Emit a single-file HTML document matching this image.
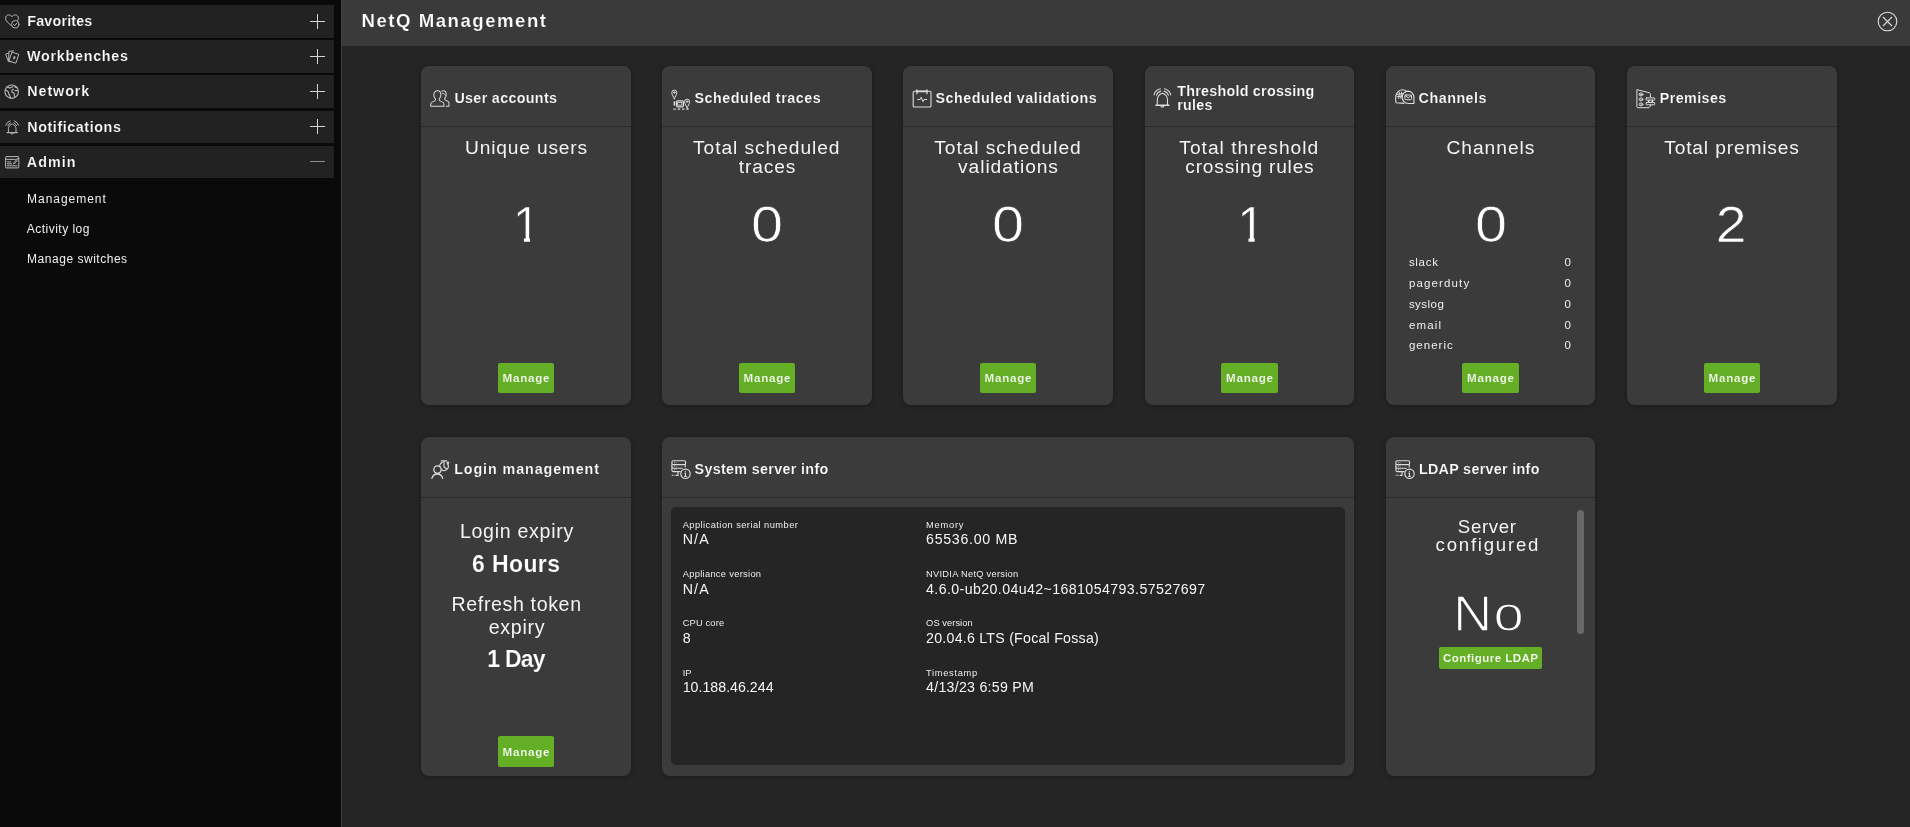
<!DOCTYPE html>
<html lang="en">
<head>
<meta charset="utf-8">
<title>NetQ Management</title>
<style>
*{box-sizing:border-box;margin:0;padding:0}
html,body{width:1910px;height:827px;overflow:hidden;background:#252525;color:#fff;font-family:"Liberation Sans",sans-serif}
body{position:relative}
#side .t,#hdr>.t,.card{will-change:opacity}
.t{position:absolute;line-height:1;white-space:nowrap}
svg{position:absolute;overflow:visible}
#side{position:absolute;left:0;top:0;width:341px;height:827px;background:#0a0a0a}
.nav{position:absolute;left:0;width:334px;background:#222}
.plus{position:absolute;left:310px;width:15px;height:15px}
.plus:before{content:"";position:absolute;left:0;top:7px;width:15px;height:1px;background:#d4d4d4}
.plus:after{content:"";position:absolute;left:7px;top:0;width:1px;height:15px;background:#d4d4d4}
.minus{position:absolute;left:310px;width:15px;height:1px;background:#8c8c8c}
#hdr{position:absolute;left:341px;top:0;width:1569px;height:46px;background:#3a3a3a}
#edge{position:absolute;left:341px;top:0;width:1px;height:827px;background:#404040}
.card{position:absolute;background:#3b3b3b;border-radius:8px;box-shadow:0 1px 5px rgba(0,0,0,.3)}
.hd{position:absolute;left:0;top:0;right:0;height:61px;border-bottom:1px solid #2a2a2a}
.num{-webkit-text-stroke:.7px #3b3b3b}
.btn{position:absolute;background:#64af26;border-radius:2px}
.panel{position:absolute;background:#252525;border-radius:5px}
.sb{position:absolute;background:#686868;border-radius:4px}
</style>
</head>
<body>
<div id="side">
<div class="nav" style="top:5px;height:33px"><svg style="left:4.9px;top:9.1px" width="15" height="15" viewBox="0 0 15 15" fill="none" stroke="#b4b4b4" stroke-width="1" stroke-linecap="round" stroke-linejoin="round"><path d="M7 2.4C5.6.2.6.1.6 4.3.6 7 3.2 8.9 6.2 11.6"/><path d="M7 2.4C8.4.2 13.4.1 13.4 4.3 13.4 5.1 13.2 5.8 12.8 6.5"/><circle cx="10.2" cy="10.3" r="3.7"/><path d="M8.5 10.4l1.2 1.2 2.2-2.6"/></svg><span class="t" style="left:27.3px;top:8.8px;font-size:14.3px;font-weight:bold;letter-spacing:0.18px;-webkit-text-stroke:.18px #222;">Favorites</span><span class="plus" style="top:9px"></span></div>
<div class="nav" style="top:40px;height:33px"><svg style="left:4.9px;top:9.5px" width="15" height="14" viewBox="0 0 15 14" fill="none" stroke="#b4b4b4" stroke-width="1" stroke-linecap="round" stroke-linejoin="round"><path d="M3.4 11.6.6 4.2 3.4 3.1"/><path d="M6.2 11.9 3.6 10.9 3.9 1.3 8.6.9"/><path d="M7.3 2.2l6.5 2.2-3 8.8-6.5-2.2z"/><ellipse cx="9.3" cy="7.7" rx="1.2" ry="1.9" transform="rotate(18 9.3 7.7)" fill="#9a9a9a" stroke="none"/></svg><span class="t" style="left:27.0px;top:9.0px;font-size:14.3px;font-weight:bold;letter-spacing:0.75px;-webkit-text-stroke:.18px #222;">Workbenches</span><span class="plus" style="top:9px"></span></div>
<div class="nav" style="top:75px;height:33px"><svg style="left:4.4px;top:8.7px" width="16" height="16" viewBox="0 0 16 16" fill="none" stroke="#b4b4b4" stroke-width="1.1" stroke-linecap="round" stroke-linejoin="round"><circle cx="7.7" cy="7.7" r="6.7"/><path d="M3.4 2.9c1.2.3 1.5 1.3 2.7 1.1 1-.2 1.3-1.4 2.6-1.2M1.4 6.4c1.1-.4 2 .3 2.7 1.2.7 1 .2 2.2 1.1 2.9 1 .8.6 2.2 1.3 3.4M9.4 5.4c-1.2.2-1.9 1.2-1.5 2.3.4 1.1 1.8.8 2.3 1.9.5 1.1-.3 2.2.6 3.2M10.7 2.4c.3 1 1.3 1.2 2.3 1.1M11.1 6.6h2.2" stroke-width="1.2"/></svg><span class="t" style="left:27.3px;top:9.2px;font-size:14.3px;font-weight:bold;letter-spacing:0.93px;-webkit-text-stroke:.18px #222;">Network</span><span class="plus" style="top:9px"></span></div>
<div class="nav" style="top:111px;height:32px"><svg style="left:4.9px;top:8.6px" width="15" height="15" viewBox="0 0 15 15" fill="none" stroke="#b4b4b4" stroke-width="1" stroke-linecap="round" stroke-linejoin="round"><path d="M0.79 5.24A6.7 6.7 0 0 1 5.13 0.83M2.88 5.63A4.6 4.6 0 0 1 5.48 2.93M9.27 0.83A6.7 6.7 0 0 1 13.61 5.24M8.92 2.93A4.6 4.6 0 0 1 11.52 5.63"/><path d="M3.4 12.4V8.8C3.4 6.5 5 4.7 7.2 4c2.2.7 3.8 2.5 3.8 4.8v3.6"/><path d="M2.1 12.6h10.2" stroke-width="1.3"/><path d="M6.1 13.7q1.1.8 2.2 0"/></svg><span class="t" style="left:27.3px;top:8.5px;font-size:14.3px;font-weight:bold;letter-spacing:0.58px;-webkit-text-stroke:.18px #222;">Notifications</span><span class="plus" style="top:8px"></span></div>
<div class="nav" style="top:146px;height:32px"><svg style="left:4.9px;top:9.8px" width="15" height="13" viewBox="0 0 15 13" fill="none" stroke="#b4b4b4" stroke-width="1" stroke-linecap="round" stroke-linejoin="round"><rect x=".6" y=".6" width="13.2" height="11.3" rx=".8"/><path d="M.6 3.4h9.8M2.3 5.9h3.4M2.3 7.8h4.4M2.3 9.8h9.8" /><path d="M12.6 2.2 9 6.6 8.4 8 9.8 7.4 13.4 3z" stroke-width=".9"/></svg><span class="t" style="left:26.8px;top:8.6px;font-size:14.3px;font-weight:bold;letter-spacing:1.03px;-webkit-text-stroke:.18px #222;">Admin</span><span class="minus" style="top:15px"></span></div>
<span class="t" style="left:27.1px;top:192.8px;font-size:12px;color:#f0f0f0;letter-spacing:0.96px;">Management</span>
<span class="t" style="left:26.8px;top:222.8px;font-size:12px;color:#f0f0f0;letter-spacing:0.48px;">Activity log</span>
<span class="t" style="left:27.1px;top:252.9px;font-size:12px;color:#f0f0f0;letter-spacing:0.52px;">Manage switches</span>
</div>
<div id="hdr">
<span class="t" style="left:20.5px;top:11.8px;font-size:18.6px;font-weight:bold;letter-spacing:1.52px;-webkit-text-stroke:.2px #3a3a3a;">NetQ Management</span>
<svg style="left:1536px;top:11px" width="21" height="21" viewBox="0 0 21 21" fill="none" stroke="#dcdcdc" stroke-width="1.1"><circle cx="10.5" cy="10.5" r="9.3"/><path d="M6 6l9 9M15 6l-9 9"/></svg>
</div>
<div id="edge"></div>
<div class="card" style="left:421px;top:66px;width:210px;height:339px">
<div class="hd">
<svg style="left:8.6px;top:23.6px" width="20.05" height="17.19" viewBox="0 0 21 18" fill="none" stroke="#dcdcdc" stroke-width="1.05" stroke-linecap="round" stroke-linejoin="round"><path d="M.8 17V14.6c0-1.4 1.1-1.9 2.5-2.4 1.6-.6 2.5-1 2.5-2.1 0-.7-.4-1.1-.8-1.7-.6-.9-1-1.7-1-3.4C4 2.6 5.4.9 7.7.9s3.7 1.7 3.7 4.1c0 1.7-.4 2.5-1 3.4-.4.6-.8 1-.8 1.7 0 1.1.9 1.5 2.5 2.1 1.4.5 2.5 1 2.5 2.4V17z"/><path d="M12.2 1.2c.5-.2 1-.3 1.5-.3 2 0 3.3 1.6 3.3 3.8 0 1.6-.3 2.3-.9 3.1-.4.6-.8.9-.8 1.6 0 1 .9 1.4 2.3 1.9 1.3.5 2.3.9 2.3 2.3V17h-2.9"/><path d="M12.9 3.3c1.3.3 2.6 1 3.3 2.3" stroke-width=".9"/></svg>
<span class="t" style="left:33.4px;top:24.8px;font-size:14.3px;font-weight:bold;letter-spacing:0.34px;-webkit-text-stroke:.18px #3b3b3b;">User accounts</span>
</div>
<span class="t" style="left:44.0px;top:71.9px;font-size:19.2px;color:#f3f3f3;letter-spacing:0.83px;">Unique users</span>
<span class="t num" style="left:75.5px;width:60px;text-align:center;top:134.1px;font-size:49.5px;clip-path:polygon(0 0,100% 0,100% 72%,55.9% 72%,55.9% 100%,45.7% 100%,45.7% 72%,0 72%);">1</span>
<div class="btn" style="left:76.9px;top:297.0px;width:56.2px;height:30.2px"><span class="t" style="left:4.7px;top:9.1px;font-size:11.6px;font-weight:bold;letter-spacing:0.75px;-webkit-text-stroke:.18px #64af26;">Manage</span></div>
</div>
<div class="card" style="left:662px;top:66px;width:210px;height:339px">
<div class="hd">
<svg style="left:8.5px;top:22.5px" width="21" height="22" viewBox="0 0 21 22" fill="none" stroke="#dcdcdc" stroke-width="1" stroke-linecap="round" stroke-linejoin="round"><path d="M3.3 9.8C2.7 7.6 0.8 5.97 0.8 3.6A2.5 2.5 0 1 1 5.8 3.6C5.8 5.97 3.9 7.6 3.3 9.8z"/><circle cx="3.3" cy="3.5" r=".8"/><path d="M16.1 19C15.5 16.8 13.6 15.07 13.6 12.7A2.5 2.5 0 1 1 18.6 12.7C18.6 15.07 16.7 16.8 16.1 19z"/><circle cx="16.1" cy="12.6" r=".8"/><rect x="5.4" y="11.8" width="7.1" height="6" rx="1.2" stroke-width="1.2"/><rect x="6.9" y="13.4" width="4.1" height="2.8" stroke-width=".9"/><path d="M3.35 12.3v4.2" stroke-width="1.5" stroke-linecap="butt"/><path d="M2.4 20.15h15.4" stroke-dasharray="2.4 1.9" stroke-width="1.2" stroke-linecap="butt"/></svg>
<span class="t" style="left:32.4px;top:24.8px;font-size:14.3px;font-weight:bold;letter-spacing:0.52px;-webkit-text-stroke:.18px #3b3b3b;">Scheduled traces</span>
</div>
<span class="t" style="left:31.1px;top:71.9px;font-size:19.2px;color:#f3f3f3;letter-spacing:0.93px;">Total scheduled</span>
<span class="t" style="left:76.7px;top:90.9px;font-size:19.2px;color:#f3f3f3;letter-spacing:0.87px;">traces</span>
<span class="t num" style="left:75.0px;width:60px;text-align:center;top:134.1px;font-size:49.5px;transform:scaleX(1.165);">0</span>
<div class="btn" style="left:76.9px;top:297.0px;width:56.2px;height:30.2px"><span class="t" style="left:4.7px;top:9.1px;font-size:11.6px;font-weight:bold;letter-spacing:0.75px;-webkit-text-stroke:.18px #64af26;">Manage</span></div>
</div>
<div class="card" style="left:903px;top:66px;width:210px;height:339px">
<div class="hd">
<svg style="left:8.5px;top:22.5px" width="21" height="20" viewBox="0 0 21 20" fill="none" stroke="#dcdcdc" stroke-width="1.1" stroke-linecap="round" stroke-linejoin="round"><rect x="1.2" y="2.3" width="17.8" height="15.7" rx="1"/><path d="M4.9.9v3.8M15 .9v3.8" stroke-width="1.3"/><path d="M4.9 2.4h10" stroke-width="1.6"/><path d="M5.7 10.5h2.3l1.2-2.2 1.8 4.3 1.1-2.1h2.6" stroke-width="1"/></svg>
<span class="t" style="left:32.5px;top:24.8px;font-size:14.3px;font-weight:bold;letter-spacing:0.51px;-webkit-text-stroke:.18px #3b3b3b;">Scheduled validations</span>
</div>
<span class="t" style="left:31.3px;top:71.9px;font-size:19.2px;color:#f3f3f3;letter-spacing:0.93px;">Total scheduled</span>
<span class="t" style="left:55.1px;top:90.9px;font-size:19.2px;color:#f3f3f3;letter-spacing:0.92px;">validations</span>
<span class="t num" style="left:75.3px;width:60px;text-align:center;top:134.1px;font-size:49.5px;transform:scaleX(1.165);">0</span>
<div class="btn" style="left:76.9px;top:297.0px;width:56.2px;height:30.2px"><span class="t" style="left:4.7px;top:9.1px;font-size:11.6px;font-weight:bold;letter-spacing:0.75px;-webkit-text-stroke:.18px #64af26;">Manage</span></div>
</div>
<div class="card" style="left:1145px;top:66px;width:209px;height:339px">
<div class="hd">
<svg style="left:8px;top:22.1px" width="20" height="20" viewBox="0 0 20 20" fill="none" stroke="#dcdcdc" stroke-width="1.1" stroke-linecap="round" stroke-linejoin="round"><path d="M1.04 6.8A8.7 8.7 0 0 1 7.3 0.76M3.44 7.15A6.3 6.3 0 0 1 7.66 3.14M11.5 0.76A8.7 8.7 0 0 1 17.76 6.8M11.14 3.14A6.3 6.3 0 0 1 15.36 7.15"/><path d="M4.3 17V11.9C4.3 8.7 6.3 6.3 9.4 5.3c3.1 1 5.1 3.4 5.1 6.6V17"/><path d="M2.9 17.3h13" stroke-width="1.4"/><path d="M8 18.5q1.4 1.1 2.8 0"/></svg>
<span class="t" style="left:32.2px;top:17.8px;font-size:14.3px;font-weight:bold;letter-spacing:0.26px;-webkit-text-stroke:.18px #3b3b3b;">Threshold crossing</span>
<span class="t" style="left:32.2px;top:31.8px;font-size:14.3px;font-weight:bold;letter-spacing:0.28px;-webkit-text-stroke:.18px #3b3b3b;">rules</span>
</div>
<span class="t" style="left:34.3px;top:71.7px;font-size:19.2px;color:#f3f3f3;letter-spacing:1.01px;">Total threshold</span>
<span class="t" style="left:40.3px;top:90.7px;font-size:19.2px;color:#f3f3f3;letter-spacing:0.77px;">crossing rules</span>
<span class="t num" style="left:76.1px;width:60px;text-align:center;top:134.1px;font-size:49.5px;clip-path:polygon(0 0,100% 0,100% 72%,55.9% 72%,55.9% 100%,45.7% 100%,45.7% 72%,0 72%);">1</span>
<div class="btn" style="left:76.4px;top:297.0px;width:56.2px;height:30.2px"><span class="t" style="left:4.7px;top:9.1px;font-size:11.6px;font-weight:bold;letter-spacing:0.75px;-webkit-text-stroke:.18px #64af26;">Manage</span></div>
</div>
<div class="card" style="left:1386px;top:66px;width:209px;height:339px">
<div class="hd">
<svg style="left:8.9px;top:22.5px" width="21" height="17" viewBox="0 0 21 17" fill="none" stroke="#dcdcdc" stroke-width="1.1" stroke-linecap="round" stroke-linejoin="round"><path d="M8.9 14.4l-7.8-.6c-.3-1.3-.5-2.7-.5-4.6C.6 4.4 3.6.7 7.4.7c1.5 0 2.8.5 3.9 1.5"/><path d="M4.4 3.4l-.7 6M6.6 3.1l-.8 6.2M2.6 5.3l5.2-.4M2.4 7.6l5-.4" stroke-width="1"/><path d="M13.3 2.1a6.2 6.2 0 1 0 0 12.4h5.6v-6.2a6.2 6.2 0 0 0-5.6-6.2z" stroke-width="1.2"/><rect x="9.9" y="6" width="6.6" height="4.7" rx=".9" stroke-width="1"/><path d="M10.4 6.6l2.8 2.2 2.8-2.2" stroke-width="1"/></svg>
<span class="t" style="left:32.6px;top:24.8px;font-size:14.3px;font-weight:bold;letter-spacing:0.51px;-webkit-text-stroke:.18px #3b3b3b;">Channels</span>
</div>
<span class="t" style="left:60.4px;top:71.9px;font-size:19.2px;color:#f3f3f3;letter-spacing:1.00px;">Channels</span>
<span class="t" style="left:22.9px;top:191.4px;font-size:11.5px;color:#f0f0f0;letter-spacing:0.70px;">slack</span>
<span class="t" style="left:178.6px;top:191.4px;font-size:11.5px;color:#f0f0f0;">0</span>
<span class="t" style="left:22.9px;top:212.4px;font-size:11.5px;color:#f0f0f0;letter-spacing:1.14px;">pagerduty</span>
<span class="t" style="left:178.6px;top:212.4px;font-size:11.5px;color:#f0f0f0;">0</span>
<span class="t" style="left:22.9px;top:233.3px;font-size:11.5px;color:#f0f0f0;letter-spacing:0.48px;">syslog</span>
<span class="t" style="left:178.6px;top:233.3px;font-size:11.5px;color:#f0f0f0;">0</span>
<span class="t" style="left:22.9px;top:254.3px;font-size:11.5px;color:#f0f0f0;letter-spacing:1.20px;">email</span>
<span class="t" style="left:178.6px;top:254.3px;font-size:11.5px;color:#f0f0f0;">0</span>
<span class="t" style="left:22.9px;top:274.4px;font-size:11.5px;color:#f0f0f0;letter-spacing:1.03px;">generic</span>
<span class="t" style="left:178.6px;top:274.4px;font-size:11.5px;color:#f0f0f0;">0</span>
<span class="t num" style="left:74.9px;width:60px;text-align:center;top:134.1px;font-size:49.5px;transform:scaleX(1.165);">0</span>
<div class="btn" style="left:76.4px;top:297.0px;width:56.2px;height:30.2px"><span class="t" style="left:4.7px;top:9.1px;font-size:11.6px;font-weight:bold;letter-spacing:0.75px;-webkit-text-stroke:.18px #64af26;">Manage</span></div>
</div>
<div class="card" style="left:1627px;top:66px;width:210px;height:339px">
<div class="hd">
<svg style="left:8.5px;top:22.5px" width="21" height="20" viewBox="0 0 21 20" fill="none" stroke="#dcdcdc" stroke-width="1" stroke-linecap="round" stroke-linejoin="round"><path d="M14.5 7.8V5.4c0-.9-.5-1.5-1.3-1.7L.9.7v17c0 .7.4 1 1 1h11.1l1.5-1.7v-.8"/><ellipse cx="5" cy="5.4" rx="1.9" ry="1.5"/><ellipse cx="5" cy="10.4" rx="1.9" ry="1.5"/><ellipse cx="5" cy="15.4" rx="1.9" ry="1.5"/><path d="M3.7 5.4h2.6M5 9.9v1M5 14.9v1" stroke-width=".9"/><rect x="10.1" y="8.9" width="8.6" height="2.2" rx=".5"/><rect x="10.1" y="13.5" width="8.6" height="2.3" rx=".5"/><path d="M12.7 11.5v1.7M16.3 11.5v1.7" stroke-width="1.5"/></svg>
<span class="t" style="left:32.8px;top:24.8px;font-size:14.3px;font-weight:bold;letter-spacing:0.40px;-webkit-text-stroke:.18px #3b3b3b;">Premises</span>
</div>
<span class="t" style="left:37.2px;top:71.9px;font-size:19.2px;color:#f3f3f3;letter-spacing:0.85px;">Total premises</span>
<span class="t num" style="left:74.2px;width:60px;text-align:center;top:134.1px;font-size:49.5px;transform:scaleX(1.13);">2</span>
<div class="btn" style="left:76.9px;top:297.0px;width:56.2px;height:30.2px"><span class="t" style="left:4.7px;top:9.1px;font-size:11.6px;font-weight:bold;letter-spacing:0.75px;-webkit-text-stroke:.18px #64af26;">Manage</span></div>
</div>
<div class="card" style="left:421px;top:437px;width:210px;height:338.5px">
<div class="hd">
<svg style="left:9.5px;top:22.5px" width="20" height="20" viewBox="0 0 20 20" fill="none" stroke="#dcdcdc" stroke-width="1.3" stroke-linecap="round" stroke-linejoin="round"><circle cx="6.5" cy="9.6" r="3.7"/><path d="M.9 18.3c.7-2.6 2.7-4.3 5.4-4.3s4.7 1.7 5.4 4.3" stroke-width="1.3"/><path d="M10.3.9h5.4M13 .9v6.1l2.5 1.8" stroke-width="1.1"/><path d="M8.72 6.67A4.3 4.3 0 0 1 11.39 2.31M16.29 3.54A4.3 4.3 0 0 1 10.53 9.82" stroke-width="1.1"/><path d="M16 2.3l1.8-.3-.5 1.9z" stroke-width=".8" fill="#dcdcdc"/></svg>
<span class="t" style="left:33.2px;top:25.1px;font-size:14.3px;font-weight:bold;letter-spacing:0.91px;-webkit-text-stroke:.18px #3b3b3b;">Login management</span>
</div>
<span class="t" style="left:38.9px;top:84.9px;font-size:19.6px;color:#f3f3f3;letter-spacing:0.70px;">Login expiry</span>
<span class="t" style="left:51.0px;top:116.0px;font-size:23px;font-weight:bold;letter-spacing:0.39px;-webkit-text-stroke:.18px #3b3b3b;">6 Hours</span>
<span class="t" style="left:30.5px;top:157.7px;font-size:19.6px;color:#f3f3f3;letter-spacing:0.63px;">Refresh token</span>
<span class="t" style="left:67.7px;top:180.7px;font-size:19.6px;color:#f3f3f3;letter-spacing:0.70px;">expiry</span>
<span class="t" style="left:66.3px;top:211.1px;font-size:23px;font-weight:bold;letter-spacing:-0.77px;-webkit-text-stroke:.18px #3b3b3b;">1 Day</span>
<div class="btn" style="left:76.9px;top:299.0px;width:56.2px;height:31px"><span class="t" style="left:4.7px;top:10.0px;font-size:11.6px;font-weight:bold;letter-spacing:0.75px;-webkit-text-stroke:.18px #64af26;">Manage</span></div>
</div>
<div class="card" style="left:662px;top:437px;width:692px;height:338.5px">
<div class="hd">
<svg style="left:8.8px;top:22.5px" width="21" height="20" viewBox="0 0 21 20" fill="none" stroke="#dcdcdc" stroke-width="1.1" stroke-linecap="round" stroke-linejoin="round"><rect x=".9" y=".8" width="13.7" height="3.8" rx="1.3"/><path d="M14.2 4.6v2.4M.9 4.6v2.4"/><path d="M11.2 8.2H2.2A1.3 1.3 0 0 1 .9 6.9v0M9.2 11.6H2.2A1.3 1.3 0 0 1 .9 10.3V8.2"/><path d="M3.2 2.7h2.2M3.2 6.2h2.2M3.2 9.7h2.2" stroke-dasharray=".8 .8" stroke-width="1" stroke-linecap="butt"/><path d="M7 11.8v3.6H5.2"/><path d="M.8 15.4h3.4" stroke-dasharray=".9 .9" stroke-linecap="butt"/><circle cx="14.5" cy="13.8" r="4.7" stroke-width="1.2"/><path d="M14.5 13.2v3M13.4 16.3h2.2M13.7 13.2h.8" stroke-width="1"/><circle cx="14.4" cy="11.3" r=".6" fill="#dcdcdc" stroke="none"/></svg>
<span class="t" style="left:32.5px;top:25.1px;font-size:14.3px;font-weight:bold;letter-spacing:0.34px;-webkit-text-stroke:.18px #3b3b3b;">System server info</span>
</div>
<div class="panel" style="left:9px;top:70px;width:673.6px;height:257.6px">
<span class="t" style="left:11.7px;top:14.1px;font-size:9.3px;color:#ededed;letter-spacing:0.45px;">Application serial number</span>
<span class="t" style="left:11.7px;top:25.0px;font-size:14.2px;color:#f5f5f5;letter-spacing:1.17px;">N/A</span>
<span class="t" style="left:255.1px;top:14.1px;font-size:9.3px;color:#ededed;letter-spacing:0.76px;">Memory</span>
<span class="t" style="left:255.1px;top:25.0px;font-size:14.2px;color:#f5f5f5;letter-spacing:0.69px;">65536.00 MB</span>
<span class="t" style="left:11.7px;top:63.1px;font-size:9.3px;color:#ededed;letter-spacing:0.31px;">Appliance version</span>
<span class="t" style="left:11.7px;top:74.7px;font-size:14.2px;color:#f5f5f5;letter-spacing:1.17px;">N/A</span>
<span class="t" style="left:255.1px;top:63.1px;font-size:9.3px;color:#ededed;letter-spacing:0.26px;">NVIDIA NetQ version</span>
<span class="t" style="left:255.1px;top:74.7px;font-size:14.2px;color:#f5f5f5;letter-spacing:0.39px;">4.6.0-ub20.04u42~1681054793.57527697</span>
<span class="t" style="left:11.7px;top:112.4px;font-size:9.3px;color:#ededed;letter-spacing:0.16px;">CPU core</span>
<span class="t" style="left:11.7px;top:124.0px;font-size:14.2px;color:#f5f5f5;">8</span>
<span class="t" style="left:255.1px;top:112.4px;font-size:9.3px;color:#ededed;letter-spacing:0.06px;">OS version</span>
<span class="t" style="left:255.1px;top:124.0px;font-size:14.2px;color:#f5f5f5;letter-spacing:0.24px;">20.04.6 LTS (Focal Fossa)</span>
<span class="t" style="left:11.7px;top:161.9px;font-size:9.3px;color:#ededed;">IP</span>
<span class="t" style="left:11.7px;top:173.4px;font-size:14.2px;color:#f5f5f5;letter-spacing:0.01px;">10.188.46.244</span>
<span class="t" style="left:255.1px;top:161.9px;font-size:9.3px;color:#ededed;letter-spacing:0.67px;">Timestamp</span>
<span class="t" style="left:255.1px;top:173.4px;font-size:14.2px;color:#f5f5f5;letter-spacing:0.26px;">4/13/23 6:59 PM</span>
</div>
</div>
<div class="card" style="left:1386px;top:437px;width:209px;height:338.5px">
<div class="hd">
<svg style="left:8.5px;top:22.5px" width="21" height="20" viewBox="0 0 21 20" fill="none" stroke="#dcdcdc" stroke-width="1.1" stroke-linecap="round" stroke-linejoin="round"><rect x=".9" y=".8" width="13.7" height="3.8" rx="1.3"/><path d="M14.2 4.6v2.4M.9 4.6v2.4"/><path d="M11.2 8.2H2.2A1.3 1.3 0 0 1 .9 6.9v0M9.2 11.6H2.2A1.3 1.3 0 0 1 .9 10.3V8.2"/><path d="M3.2 2.7h2.2M3.2 6.2h2.2M3.2 9.7h2.2" stroke-dasharray=".8 .8" stroke-width="1" stroke-linecap="butt"/><path d="M7 11.8v3.6H5.2"/><path d="M.8 15.4h3.4" stroke-dasharray=".9 .9" stroke-linecap="butt"/><circle cx="14.5" cy="13.8" r="4.7" stroke-width="1.2"/><path d="M14.5 13.2v3M13.4 16.3h2.2M13.7 13.2h.8" stroke-width="1"/><circle cx="14.4" cy="11.3" r=".6" fill="#dcdcdc" stroke="none"/></svg>
<span class="t" style="left:32.9px;top:25.1px;font-size:14.3px;font-weight:bold;letter-spacing:0.32px;-webkit-text-stroke:.18px #3b3b3b;">LDAP server info</span>
</div>
<span class="t" style="left:71.8px;top:81.0px;font-size:18.6px;color:#f3f3f3;letter-spacing:0.69px;">Server</span>
<span class="t" style="left:49.6px;top:99.0px;font-size:18.6px;color:#f3f3f3;letter-spacing:1.77px;">configured</span>
<span class="t num" style="left:67.1px;top:152.4px;font-size:49.5px;letter-spacing:1px;transform:scaleX(1.1);transform-origin:0 0;-webkit-text-stroke:1.3px #3b3b3b">No</span>
<div class="btn" style="left:52.9px;top:210.0px;width:103.2px;height:21.6px"><span class="t" style="left:4.1px;top:5.0px;font-size:11.6px;font-weight:bold;letter-spacing:0.42px;-webkit-text-stroke:.18px #64af26;">Configure LDAP</span></div>
<div class="sb" style="left:191.2px;top:72.8px;width:6.9px;height:124px"></div>
</div>
</body>
</html>
